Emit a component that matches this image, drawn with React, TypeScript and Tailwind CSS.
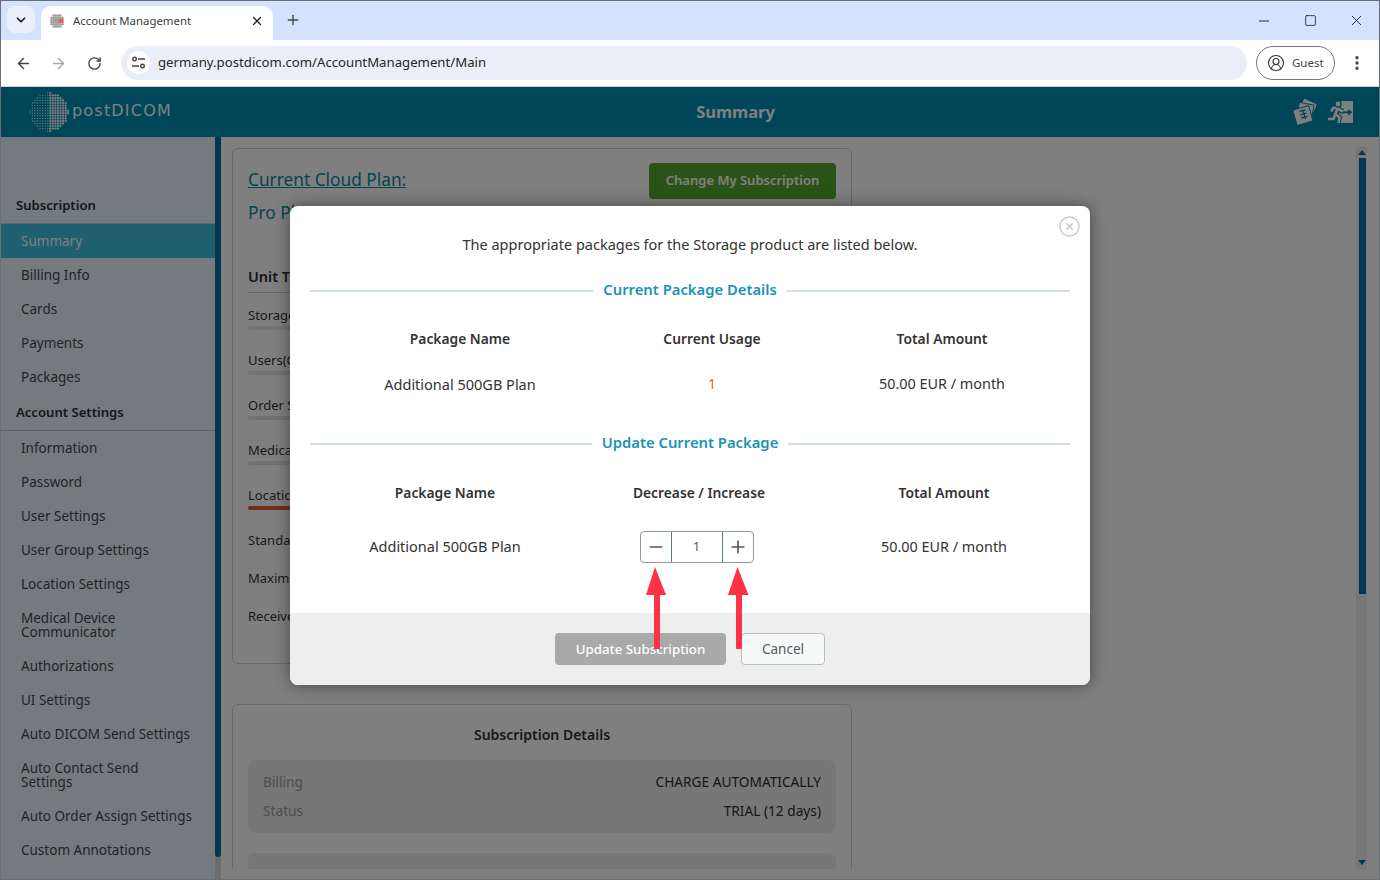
import React from "react";
import { ArrowLeft, ArrowRight, ChevronDown, CircleUserRound, EllipsisVertical, Minus, Plus, RotateCw, Square, X, CircleX } from "lucide-react";

function Sphere({ size, small }: { size: number; small?: boolean }) {
  const dots: React.ReactNode[] = [];
  const n = small ? 7 : 15;
  for (let r = 0; r <= n; r++) {
    for (let c = 0; c <= n; c++) {
      const x = (c / n) * 2 - 1;
      const y = (r / n) * 2 - 1;
      if (x * x + y * y > 1.02) continue;
      const right = x > 0.02;
      dots.push(
        <circle
          key={`${r}-${c}`}
          cx={50 + x * 48}
          cy={50 + y * 48}
          r={small ? 8 : right ? 2.9 : 1.8}
          fill={small && x > 0.2 && Math.abs(y) < 0.3 ? "#d9534f" : small ? "#9a9a9a" : "#ffffff"}
          opacity={small || right ? 0.95 : 0.75}
        />
      );
    }
  }
  return (
    <svg width={size} height={size} viewBox="0 0 100 100" className="shrink-0">
      {dots}
    </svg>
  );
}

function CardsIcon() {
  return (
    <svg width="26" height="27" viewBox="0 0 26 27" className="shrink-0">
      <rect x="9" y="2" width="14" height="12" rx="1" fill="#fff" transform="rotate(25 16 8)" />
      <rect x="6" y="4.5" width="15" height="13" rx="1" fill="#fff" stroke="#008cb2" strokeWidth="1" transform="rotate(12 13 11)" />
      <rect x="2.5" y="8.5" width="16.5" height="16" rx="1.2" fill="#fff" stroke="#008cb2" strokeWidth="1" transform="rotate(-16 11 16)" />
      <path d="M7.5 12.5l6-1.700M8.500 15.800l6-1.700M9.300 19l6-1.700M11 11.500l2.500 8.600" stroke="#008cb2" strokeWidth="1.4" fill="none" />
    </svg>
  );
}

const runner = "M3 10.500L5.500 6.800H9.500L13 10H16M9.500 6.800L7.500 13L11.500 16.300L10.500 22M7.500 13L5.500 18H0";

function ExitIcon() {
  return (
    <svg width="26" height="23" viewBox="0 0 26 23" className="shrink-0">
      <path d="M11 0H25V22H11Z" fill="#fff" />
      <path d={runner} fill="none" stroke="#008cb2" strokeWidth="4.800" />
      <path d={runner} fill="none" stroke="#fff" strokeWidth="2.600" />
      <circle cx="10" cy="3" r="3.800" fill="#008cb2" />
      <circle cx="10" cy="3" r="2.400" fill="#fff" />
      <path d="M15 10.200H20V8L24.500 11.200L20 14.500V12.200H15Z" fill="#008cb2" />
    </svg>
  );
}

const navHead = "flex h-[37px] items-center border-b border-[#b4c9d4] pl-[15px] pt-[1px] text-[13.1px] font-semibold text-[#2b3033]";

function Nav({ label, active }: { label: React.ReactNode; active?: boolean }) {
  return (
    <div
      className={
        active
          ? "flex h-[34px] items-center whitespace-nowrap bg-[#3cbee0] pl-5 text-[13.5px] text-white"
          : "flex min-h-[34px] items-center whitespace-nowrap py-[10px] pl-5 text-[13.5px] leading-[14px] text-[#43494d]"
      }
    >
      <span>{label}</span>
    </div>
  );
}

function Usage({ label, bar, tall }: { label: string; bar?: string; tall?: boolean }) {
  return (
    <div className={tall ? "flex h-[38px] items-center text-[13px] text-[#333]" : "flex h-[45px] flex-col justify-center pb-[2px] text-[13px] text-[#333]"}>
      <span className="leading-[18px]">{label}</span>
      {!tall && <div className={`mt-[2px] h-[4px] w-full rounded-full ${bar ?? "bg-[#e4e4e4]"}`} />}
    </div>
  );
}

function SectionTitle({ label }: { label: string }) {
  return (
    <div className="flex items-center gap-[10px] px-5">
      <div className="mt-[3px] h-[2px] flex-1 bg-[#d3e0e1]" />
      <div className="text-[14.8px] font-semibold leading-[22px] text-[#1a93b5]">{label}</div>
      <div className="mt-[3px] h-[2px] flex-1 bg-[#d3e0e1]" />
    </div>
  );
}

export default function App() {
  return (
    <div className="relative flex h-[880px] w-[1380px] flex-col overflow-hidden border border-[#6b6e73] bg-white font-['Noto_Sans',sans-serif]">
      {/* tab strip */}
      <div className="flex h-[39px] shrink-0 items-end bg-[#d3e3fd] pl-[6px]">
        <div className="mb-[7px] flex h-[27px] w-7 items-center justify-center rounded-lg bg-[#e9effb] text-[#1f1f1f]">
          <ChevronDown size={14} strokeWidth={3} />
        </div>
        <div className="ml-[6px] flex h-[34px] w-[232px] items-center rounded-t-[10px] bg-white pb-[5px] pl-2 pr-[9px]">
          <Sphere size={16} small />
          <span className="ml-[8px] flex-1 text-[11.4px] text-[#3c3c3c]">Account Management</span>
          <X size={14} strokeWidth={2.2} className="text-[#222]" />
        </div>
        <div className="mb-[12px] ml-[12px] text-[#444]">
          <Plus size={16} strokeWidth={2} />
        </div>
        <div className="flex-1" />
        <div className="mb-[11px] flex items-center text-[#111]">
          <Minus size={16} strokeWidth={1.3} className="mr-[32px]" />
          <Square size={13} strokeWidth={1.4} className="mr-[31px]" />
          <X size={17} strokeWidth={1.2} className="mr-[14px]" />
        </div>
      </div>
      {/* toolbar */}
      <div className="flex h-[47px] shrink-0 items-center border-b border-[#d8d8d8] bg-white pb-[1px] pl-[14px]">
        <ArrowLeft size={17} strokeWidth={2} className="mt-[1px] text-[#444]" />
        <ArrowRight size={17} strokeWidth={2} className="ml-[18px] mt-[1px] text-[#a8a8a8]" />
        <RotateCw size={15} strokeWidth={2.2} className="ml-[20px] mt-[1px] text-[#444]" />
        <div className="ml-[19px] flex h-[34px] w-[1126px] items-center rounded-full bg-[#e9eef8] pl-[6px]">
          <div className="flex h-[23px] w-[23px] items-center justify-center rounded-full bg-white">
            <svg width="15" height="13" viewBox="0 0 15 13" fill="none" stroke="#444" strokeWidth="1.4">
              <circle cx="3.5" cy="3" r="1.8" />
              <path d="M7 3h7M1 10h7" />
              <circle cx="11.5" cy="10" r="1.8" />
            </svg>
          </div>
          <span className="ml-2 pt-[1px] text-[13.2px] text-[#27272a]">germany.postdicom.com/AccountManagement/Main</span>
        </div>
        <div className="ml-[9px] flex h-[34px] w-[79px] items-center rounded-full border border-[#767676] pl-[10px]">
          <CircleUserRound size={18} strokeWidth={1.5} className="text-[#333]" />
          <span className="ml-[7px] text-[11.5px] text-[#444]">Guest</span>
        </div>
        <EllipsisVertical size={18} strokeWidth={2.4} className="ml-[13px] text-[#444]" />
      </div>

      {/* page */}
      <div className="relative flex min-h-0 flex-1 flex-col">
        <div className="flex h-[50px] shrink-0 items-center bg-[#008cb2]">
          <div className="flex w-[220px] items-center pl-[28px]">
            <Sphere size={40} />
            <span className="ml-[3px] mt-[-3px] font-['DejaVu_Sans',sans-serif] text-[16px] tracking-[1.2px] text-white">postDICOM</span>
          </div>
          <div className="flex-1 pt-[1px] text-center text-[16.5px] font-bold text-white">Summary</div>
          <div className="flex w-[129px] items-center gap-[10px] pl-[42px]">
            <CardsIcon />
            <ExitIcon />
          </div>
        </div>
        <div className="flex min-h-0 flex-1">
          {/* sidebar */}
          <div className="h-full w-[214px] shrink-0 overflow-hidden bg-[#e6f6ff] pt-[50px]">
            <div className={navHead}>Subscription</div>
            <Nav label="Summary" active />
            <Nav label="Billing Info" />
            <Nav label="Cards" />
            <Nav label="Payments" />
            <Nav label="Packages" />
            <div className={navHead}>Account Settings</div>
            <Nav label="Information" />
            <Nav label="Password" />
            <Nav label="User Settings" />
            <Nav label="User Group Settings" />
            <Nav label="Location Settings" />
            <Nav label={<>Medical Device<br />Communicator</>} />
            <Nav label="Authorizations" />
            <Nav label="UI Settings" />
            <Nav label="Auto DICOM Send Settings" />
            <Nav label={<>Auto Contact Send<br />Settings</>} />
            <Nav label="Auto Order Assign Settings" />
            <Nav label="Custom Annotations" />
          </div>
          <div className="h-full w-[6px] shrink-0 bg-[#d8d8d8]">
            <div className="h-[720px] rounded-b-[3px] bg-[#00729e]" />
          </div>
          {/* content */}
          <div className="min-w-0 flex-1">
            <div className="flex h-[732px]">
              <div className="h-full flex-1 overflow-hidden pl-[11px] pt-[11px]">
                <div className="h-[516px] w-[620px] rounded-[6px] border border-[#cfcfcf] px-[15px] pt-[14px]">
                  <div className="flex h-[36px] items-start justify-between">
                    <div className="text-[17.3px] leading-[34px] text-[#0e85a6] underline">Current Cloud Plan:</div>
                    <div className="flex h-[36px] w-[187px] items-center justify-center rounded-[4px] bg-[#55a92f] text-[13px] font-semibold text-white">Change My Subscription</div>
                  </div>
                  <div className="mt-[-4px] h-[36px] text-[17.3px] leading-[36px] text-[#0e85a6]">Pro Plan</div>
                  <div className="mt-[30px] flex h-[32px] items-center border-b border-[#cfcfcf] text-[14.5px] font-semibold text-[#2d2d2d]">Unit Type</div>
                  <div className="pt-[3px]">
                    <Usage label="Storage" />
                    <Usage label="Users(Concurrent)" />
                    <Usage label="Order Statistics" />
                    <Usage label="Medical Devices" />
                    <Usage label="Locations" bar="bg-[#e2603a]" />
                    <Usage label="Standard Support" tall />
                    <Usage label="Maximum Users" tall />
                    <Usage label="Receive Orders" tall />
                  </div>
                </div>
                <div className="mt-[40px] w-[620px] rounded-[6px] border border-[#cfcfcf] px-[15px]">
                  <div className="flex h-[55px] items-end justify-center pb-[15px] text-[14px] font-semibold text-[#333]">Subscription Details</div>
                  <div className="rounded-[8px] bg-[#eeeeee] px-[15px] pb-[7px] pt-[8px] text-[13.7px]">
                    <div className="flex h-[29px] items-center justify-between">
                      <span className="text-[#9a9a9a]">Billing</span>
                      <span className="text-[#2d2d2d]">CHARGE AUTOMATICALLY</span>
                    </div>
                    <div className="flex h-[29px] items-center justify-between">
                      <span className="text-[#9a9a9a]">Status</span>
                      <span className="text-[#2d2d2d]">TRIAL (12 days)</span>
                    </div>
                  </div>
                  <div className="mt-[20px] h-[60px] rounded-[8px] bg-[#eeeeee]" />
                </div>
              </div>
              <div className="relative mr-[12px] mt-[10px] w-[11px] shrink-0 bg-[#eeeeee]">
                <div className="ml-[3px] mt-[11px] h-[436px] w-[7px] bg-[#00729e]" />
                <div className="absolute left-[2px] top-[3px] h-0 w-0 border-x-[4px] border-b-[5px] border-x-transparent border-b-[#00729e]" />
                <div className="absolute bottom-[4px] left-[2px] h-0 w-0 border-x-[4px] border-t-[5px] border-x-transparent border-t-[#00729e]" />
              </div>
            </div>
            <div className="h-[10px] overflow-hidden pl-[502px] pt-[7px] text-[13px] text-[#333]">100.00 EUR</div>
          </div>
        </div>
        <div className="absolute inset-0 bg-black/50" />
      </div>

      {/* modal */}
      <div className="absolute left-[289px] top-[205px] flex h-[479px] w-[800px] flex-col overflow-hidden rounded-[8px] bg-white shadow-[0_0_16px_rgba(0,0,0,0.45)]">
        <CircleX size={23} strokeWidth={1.6} className="absolute right-[9px] top-[9px] text-[#cccccc]" />
        <div className="flex h-[72px] items-start justify-center pt-[26px] text-[14.5px] leading-[24px] text-[#333]">The appropriate packages for the Storage product are listed below.</div>
        <SectionTitle label="Current Package Details" />
        <div className="ml-5 mt-[27px] grid w-[760px] grid-cols-[300px_204px_256px] text-center text-[#333]">
          <div className="text-[13.8px] font-semibold leading-[24px]">Package Name</div>
          <div className="text-[13.8px] font-semibold leading-[24px]">Current Usage</div>
          <div className="text-[13.8px] font-semibold leading-[24px]">Total Amount</div>
          <div className="mt-[21px] text-[14.5px] leading-[24px]">Additional 500GB Plan</div>
          <div className="mt-[21px] text-[14px] leading-[24px] text-[#b4752c]">1</div>
          <div className="mt-[21px] text-[14.4px] leading-[24px]">50.00 EUR / month</div>
        </div>
        <div className="mt-[35px]">
          <SectionTitle label="Update Current Package" />
        </div>
        <div className="ml-5 mt-[28px] grid w-[760px] grid-cols-[270px_238px_252px] items-center text-center text-[#333]">
          <div className="text-[13.8px] font-semibold leading-[24px]">Package Name</div>
          <div className="text-[13.8px] font-semibold leading-[24px]">Decrease / Increase</div>
          <div className="text-[13.8px] font-semibold leading-[24px]">Total Amount</div>
          <div className="mt-[26px] pb-[2px] text-[14.5px] leading-[30px]">Additional 500GB Plan</div>
          <div className="mt-[26px] flex justify-center pr-[5px]">
            <div className="flex h-[32px] w-[114px] overflow-hidden rounded-[4px] border border-[#8c9aa0] text-[#555]">
              <div className="flex w-[30px] items-center justify-center"><Minus size={20} strokeWidth={2} /></div>
              <div className="flex w-[52px] items-center justify-center border-x border-[#5f7a80] text-[13px] text-[#6b5a3e]">1</div>
              <div className="flex flex-1 items-center justify-center"><Plus size={20} strokeWidth={2} /></div>
            </div>
          </div>
          <div className="mt-[26px] pb-[1px] text-[14.4px] leading-[30px]">50.00 EUR / month</div>
        </div>
        <div className="mt-auto flex h-[72px] items-start justify-center gap-[15px] bg-[#eeeeee] pt-[20px]">
          <div className="flex h-[32px] w-[171px] items-center justify-center rounded-[4px] bg-[#a9a9a9] pt-[1px] text-[13.3px] font-medium text-white">Update Subscription</div>
          <div className="flex h-[32px] w-[84px] items-center justify-center rounded-[4px] border border-[#b3bfc0] bg-[#f7f8f8] text-[13.5px] text-[#4f5b62]">Cancel</div>
        </div>
        <svg className="absolute left-[340px] top-[355px]" width="130" height="95" viewBox="0 0 130 95">
          <path d="M25 6L36 34H30V88H24V34H16Z" fill="#fd3345" />
          <path d="M107.500 6L118.500 34H112V88H106V34H98Z" fill="#fd3345" />
        </svg>
      </div>
    </div>
  );
}
